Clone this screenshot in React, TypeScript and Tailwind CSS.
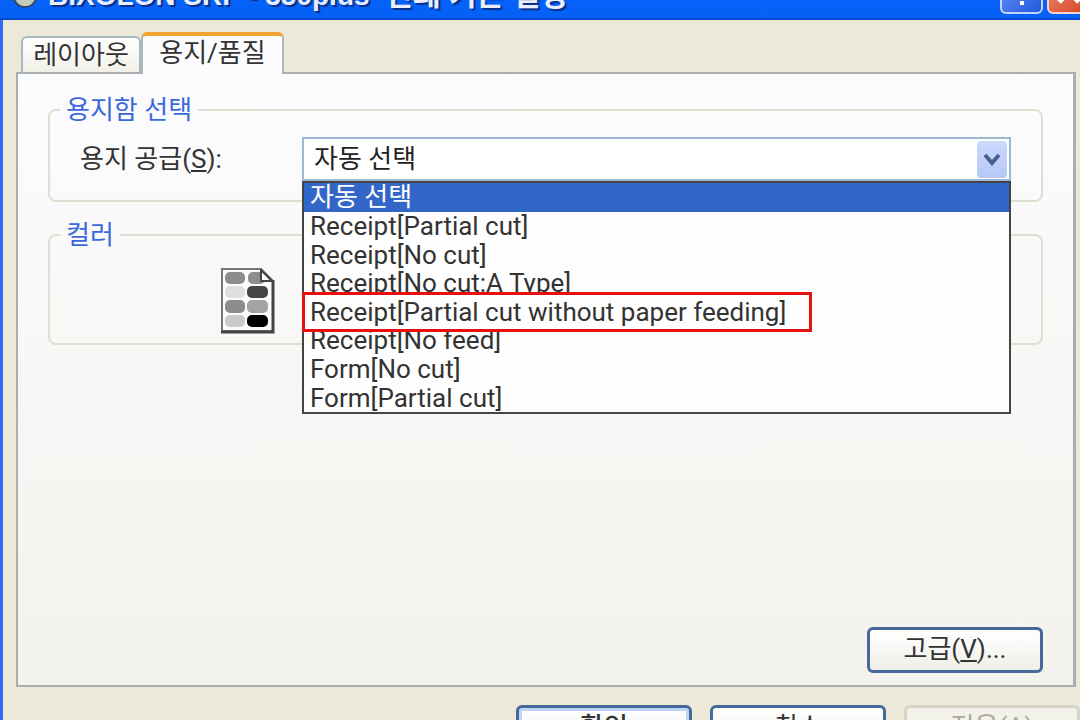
import { useState } from 'react';
import type { ReactNode } from 'react';
import clsx from 'clsx';

const AUTO = '자동 선택';
const MARKED = 'Receipt[Partial cut without paper feeding]';

const sources = [
  AUTO,
  'Receipt[Partial cut]',
  'Receipt[No cut]',
  'Receipt[No cut:A Type]',
  MARKED,
  'Receipt[No feed]',
  'Form[No cut]',
  'Form[Partial cut]',
];

function TitleBar() {
  return (
    <header className="flex h-5 shrink-0 items-end overflow-hidden border-b-2 border-[#0a48d2] bg-linear-to-b from-[#0562fa] to-[#0560f5] pl-3">
      <svg className="mb-2.5 shrink-0" width="26" height="26" viewBox="0 0 26 26" aria-hidden="true">
        <circle cx="13" cy="13" r="12" fill="#7d8580" stroke="#2f4350" strokeWidth="1.5" />
        <path d="M4 18c3-4 6 2 9-1s5 3 9 0c-1 5-5 7-9 7s-7-2-9-6z" fill="#c4cbbd" />
      </svg>
      <h1 className="mb-2 min-w-0 flex-1 pl-2.5 font-['Liberation_Sans','Noto_Sans_CJK_KR',sans-serif] text-[28px] leading-7 font-bold whitespace-nowrap text-[#e8eefc] [text-shadow:2px_2px_1px_#0a2f8c]">
        BIXOLON SRP - 350plus <span className="ml-2 text-[30px]">인쇄 기본 설정</span>
      </h1>
      <div className="mb-1 -mr-2.5 flex shrink-0 gap-1">
        <button
          type="button"
          aria-label="도움말"
          className="flex h-[42px] w-[43px] items-center justify-center rounded-md border-2 border-[#c3d3fa] bg-linear-to-br from-[#6a95f5] to-[#2257dc]"
        >
          <svg width="26" height="36" viewBox="0 0 26 36" fill="none" stroke="#fff" strokeWidth="4">
            <path d="M6 9c0-9 14-9 14-1 0 6-7 6-7 13" />
            <path d="M13 26v4" />
          </svg>
        </button>
        <button
          type="button"
          aria-label="닫기"
          className="flex h-[42px] w-[43px] items-center justify-center rounded-md border-2 border-[#f3d5cd] bg-linear-to-br from-[#e98b70] to-[#d5421c]"
        >
          <svg width="26" height="26" viewBox="0 0 26 26" stroke="#fff" strokeWidth="5">
            <path d="M3 2l20 20M23 2L3 22" />
          </svg>
        </button>
      </div>
    </header>
  );
}

function Group({ title, className, children }: { title: string; className?: string; children: ReactNode }) {
  return (
    <fieldset className={clsx('min-w-0 rounded-lg border-2 border-[#dedfd0] pl-2.5', className)}>
      <legend className="px-1.5 leading-7 text-[#3a68dc]">{title}</legend>
      {children}
    </fieldset>
  );
}

function ColorPageIcon() {
  return (
    <svg width="56" height="68" viewBox="0 0 56 68" aria-hidden="true">
      <path d="M2 2h39l12 12v50H2z" fill="#fbfbfb" stroke="#777" strokeWidth="2" />
      <path d="M53 13v52H1" fill="none" stroke="#444" strokeWidth="3" />
      <rect x="5" y="5" width="20" height="12" rx="5" fill="#8d8d8d" />
      <rect x="28" y="5" width="17" height="12" rx="5" fill="#8d8d8d" />
      <rect x="5" y="19" width="20" height="12" rx="5" fill="#dedede" />
      <rect x="27" y="19" width="21" height="12" rx="5" fill="#444" />
      <rect x="5" y="33" width="20" height="13" rx="5" fill="#8d8d8d" />
      <rect x="27" y="33" width="21" height="13" rx="5" fill="#a3a3a3" />
      <rect x="5" y="48" width="20" height="12" rx="5" fill="#cacaca" />
      <rect x="27" y="48" width="21" height="12" rx="5" fill="#000" />
      <path d="M41 3v11h11z" fill="#fff" stroke="#444" strokeWidth="2" strokeLinejoin="round" />
    </svg>
  );
}

function SourceSelect({ id }: { id: string }) {
  const [value, setValue] = useState(AUTO);

  return (
    <div className="relative min-w-0 flex-1">
      <select
        id={id}
        value={value}
        onChange={(e) => setValue(e.target.value)}
        className="block h-11 w-full appearance-none border-2 border-[#9db8d2] bg-white pr-10 pl-2.5 text-[#222] outline-none"
      >
        {sources.map((source) => (
          <option key={source}>{source}</option>
        ))}
      </select>
      <span className="pointer-events-none absolute top-1 right-1 flex h-[37px] w-[30px] items-center justify-center rounded-sm bg-linear-to-b from-[#ccd9fd] to-[#b5c8f8]">
        <svg width="18" height="14" viewBox="0 0 18 14" fill="none" stroke="#4a5f8c" strokeWidth="4">
          <path d="M2 2l7 8 7-8" />
        </svg>
      </span>
      <ul
        role="listbox"
        className="absolute inset-x-0 top-full z-10 flex h-[233px] flex-col border-2 border-[#444] bg-[#fefefe] leading-7"
      >
        {sources.map((source) => (
          <li
            key={source}
            role="option"
            aria-selected={source === value}
            onClick={() => setValue(source)}
            className={clsx(
              'flex min-h-0 flex-1 items-center pl-1.5 whitespace-nowrap',
              source === value && 'bg-[#3267c8] text-white',
              source === MARKED && 'relative z-10',
            )}
          >
            {source === MARKED && (
              <span className="absolute -inset-y-1.5 -left-0.5 w-[510px] border-[3px] border-[#e6100f] bg-[#fefefe]" />
            )}
            <span className="relative">{source}</span>
          </li>
        ))}
      </ul>
    </div>
  );
}

const buttonBase = 'h-[46px] w-44 shrink-0 rounded-md border-[3px] pb-1';
const buttonEnabled = 'border-[#44699a] bg-linear-to-b from-white to-[#efeee8]';

export default function App() {
  return (
    <div className="flex h-screen flex-col overflow-hidden bg-[#ece9d8] font-[Roboto,'Noto_Sans_CJK_KR',sans-serif] text-[26px] text-[#333]">
      <TitleBar />
      <main className="flex min-h-0 flex-1 flex-col border-l-3 border-[#2d6cf0] pt-3">
        <div role="tablist" className="relative flex items-end pl-[18px]">
          <button
            type="button"
            role="tab"
            aria-selected="false"
            className="h-9 w-[120px] rounded-t-md border-2 border-b-0 border-[#a9b8bd] bg-linear-to-b from-white to-[#f1f0e8] leading-8"
          >
            레이아웃
          </button>
          <button
            type="button"
            role="tab"
            aria-selected="true"
            className="-mb-0.5 h-[42px] w-[143px] rounded-t-md border-x-2 border-t-4 border-x-[#a9b8bd] border-t-[#f0a530] bg-[#fcfcfe] pb-1 leading-8"
          >
            용지/품질
          </button>
        </div>
        <section className="mr-1 ml-[13px] flex h-[615px] shrink-0 flex-col border-2 border-r-3 border-[#a7afb1] bg-linear-to-b from-[#fcfcfe] to-[#f3f2ed] px-[30px] pt-[22px]">
          <Group title="용지함 선택" className="pr-[30px] pb-[19px]">
            <div className="flex pt-[13px] pl-5">
              <label htmlFor="paper-source" className="w-[222px] shrink-0 pt-1.5 leading-8">
                용지 공급(<span className="underline underline-offset-2">S</span>):
              </label>
              <SourceSelect id="paper-source" />
            </div>
          </Group>
          <Group title="컬러" className="mt-[19px] h-[124px]">
            <div className="pt-[18px] pl-40">
              <ColorPageIcon />
            </div>
          </Group>
          <button type="button" className={clsx(buttonBase, buttonEnabled, 'mt-auto mb-3 self-end')}>
            고급(<span className="underline underline-offset-2">V</span>)...
          </button>
        </section>
        <footer className="flex shrink-0 justify-end gap-[18px] pt-[18px]">
          <button
            type="submit"
            className={clsx(buttonBase, buttonEnabled, 'font-medium shadow-[inset_0_0_0_3px_#bcd4f6]')}
          >
            확인
          </button>
          <button type="button" className={clsx(buttonBase, buttonEnabled)}>
            취소
          </button>
          <button type="button" disabled className={clsx(buttonBase, 'border-[#d6d4c4] bg-[#f3f2ea] text-[#aaa99c]')}>
            적용(<span className="underline underline-offset-2">A</span>)
          </button>
        </footer>
      </main>
    </div>
  );
}
